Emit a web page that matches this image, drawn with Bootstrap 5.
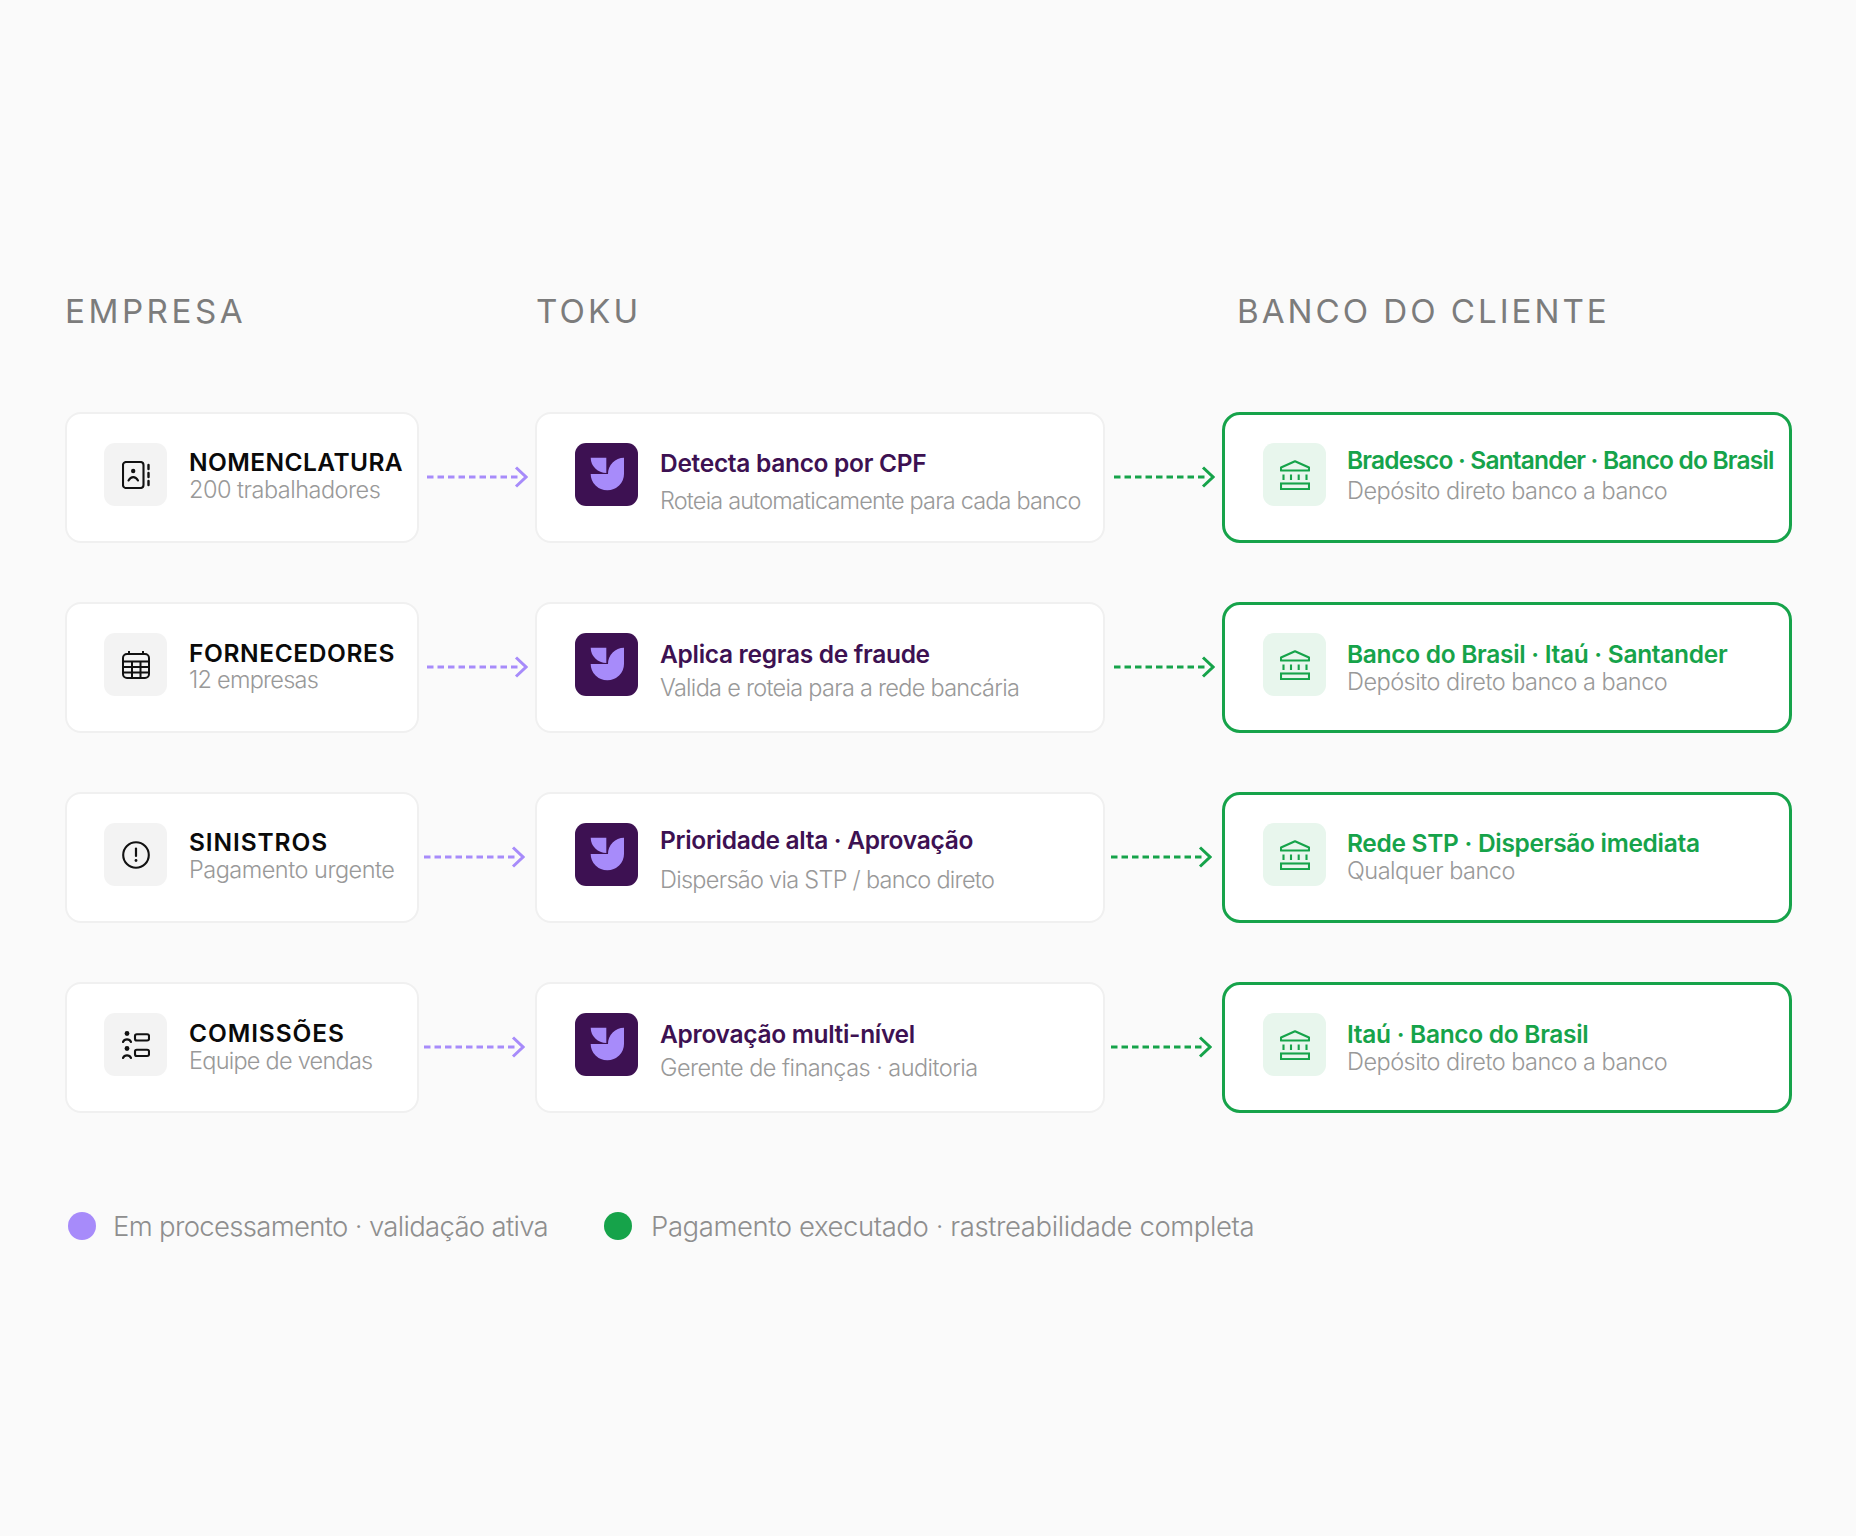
<!DOCTYPE html>
<html lang="pt-BR">
<head>
  <meta charset="utf-8">
  <title>Fluxo de pagamentos</title>
  <link href="https://cdn.jsdelivr.net/npm/bootstrap@5.3.0/dist/css/bootstrap.min.css" rel="stylesheet">
  <style>
    body {
      background-color: #fafafa;
      font-family: "Inter", "Liberation Sans", sans-serif;
      min-height: 1536px;
    }
    .flow-page {
      padding: 288px 0 0 65px;
    }
    .head-row {
      display: flex;
      margin-bottom: 78px;
      font-size: 33.2px;
      line-height: 46px;
      letter-spacing: 3.1px;
      color: #7c7c7c;
    }
    .head-empresa { width: 471px; letter-spacing: 3.5px; }
    .head-toku { width: 701px; }
    .head-banco { letter-spacing: 2.95px; }
    .flow-grid {
      display: grid;
      grid-template-columns: 354px 116px 570px 117px 570px;
      row-gap: 59px;
    }
    .flow-box {
      height: 131px;
      background: #fff;
      border: 2px solid #f0f0f0;
      border-radius: 16px;
      display: flex;
      align-items: flex-start;
      padding: 29px 0 0 37px;
    }
    .flow-box.toku { padding-left: 38px; }
    .flow-box.done {
      border: 3px solid #16a34a;
      border-radius: 18px;
      padding: 28px 0 0 38px;
    }
    .glyph-box {
      width: 63px;
      height: 63px;
      flex: none;
      border-radius: 11px;
      background: #f3f3f3;
      display: flex;
      align-items: center;
      justify-content: center;
    }
    .glyph-box.brand { background: #3d1152; }
    .glyph-box.bank { background: #e8f6ed; }
    .stack { margin-left: 22px; white-space: nowrap; }
    .flow-box.done .stack { margin-left: 21px; }
    .stack-title {
      font-size: 24.5px;
      line-height: 30px;
      font-weight: 600;
      letter-spacing: -0.3px;
    }
    .stack-title.who { color: #0a0a0a; letter-spacing: 0.6px; }
    .stack-title.who.who-narrow { letter-spacing: 0.42px; }
    .stack-title.who.who-wide { letter-spacing: 0.9px; }
    .toku .stack-title { color: #3d1152; }
    .done .stack-title { color: #16a34a; }
    .stack-title.squeezed { letter-spacing: -0.82px; }
    .stack-sub {
      font-size: 23.5px;
      line-height: 30px;
      font-weight: 300;
      color: #999;
      letter-spacing: -0.5px;
    }
    .toku .stack-sub { letter-spacing: -0.72px; }
    .toku .stack-sub.sub-tight { letter-spacing: -0.83px; }
    .toku .stack-sub.sub-wide { letter-spacing: -0.55px; }
    .stack-sub.sub-tight { letter-spacing: -0.75px; }
    .top-47 { margin-top: 2px; }
    .top-49 { margin-top: 4px; }
    .top-50 { margin-top: 5px; }
    .top-51 { margin-top: 6px; }
    .gap-27 { margin-top: -3px; }
    .gap-28 { margin-top: -2px; }
    .gap-31 { margin-top: 1px; }
    .gap-34 { margin-top: 4px; }
    .gap-38 { margin-top: 8px; }
    .gap-40 { margin-top: 10px; }
    .hop {
      display: flex;
      align-items: flex-start;
      padding: 53px 0 0 8px;
    }
    .hop.left-shift { padding-left: 5px; }
    .hop.to-bank { padding-left: 9px; }
    .hop.to-bank.left-shift { padding-left: 6px; }
    .legend-line {
      display: flex;
      align-items: center;
      margin-top: 93px;
      padding-left: 3px;
      font-size: 27.5px;
      line-height: 40px;
      font-weight: 300;
      color: #8e8e8e;
    }
    .legend-first { letter-spacing: -0.68px; }
    .legend-second { letter-spacing: -0.42px; }
    .legend-dot {
      width: 28px;
      height: 28px;
      border-radius: 50%;
      flex: none;
      margin-right: 17px;
    }
    .legend-dot.purple { background: #a78bfa; }
    .legend-dot.green { background: #16a34a; margin-left: 56px; margin-right: 19px; }
  </style>
</head>
<body>
  <svg width="0" height="0" class="position-absolute">
    <defs>
      <symbol id="logo" viewBox="0 0 63 63">
        <path fill="#a78bfa" d="M15.7 14.7H31.3V30A15.6 15.6 0 0 1 15.7 14.7Z"/>
        <path fill="#a78bfa" d="M15.7 31H33A16 16.3 0 0 1 49 14.7V31A16.6 16.3 0 0 1 32.3 47.3A16.6 16.3 0 0 1 15.7 31Z"/>
      </symbol>
      <symbol id="bank" viewBox="0 0 30 30">
        <g fill="none" stroke="#16a34a" stroke-width="2.1">
          <path d="M1 10.5V7.5L15 1.2 29 7.5V10.5Z" stroke-linejoin="round"/>
          <path d="M3.5 14.5V20M11 14.5V20M18.7 14.5V20M26.5 14.5V20"/>
          <rect x="1" y="23.5" width="28" height="5.6"/>
        </g>
      </symbol>
      <symbol id="arrow-purple" viewBox="0 0 101 24">
        <path d="M0 12H92" stroke="#a78bfa" stroke-width="3" stroke-dasharray="6.5 4"/>
        <path d="M89 2.5 99 12 89 21.5" fill="none" stroke="#a78bfa" stroke-width="3"/>
      </symbol>
      <symbol id="arrow-green" viewBox="0 0 101 24">
        <path d="M0 12H92" stroke="#16a34a" stroke-width="3" stroke-dasharray="6.5 4"/>
        <path d="M89 2.5 99 12 89 21.5" fill="none" stroke="#16a34a" stroke-width="3"/>
      </symbol>
    </defs>
  </svg>

  <div class="flow-page">
    <div class="head-row">
      <div class="head-empresa">EMPRESA</div>
      <div class="head-toku">TOKU</div>
      <div class="head-banco">BANCO DO CLIENTE</div>
    </div>

    <div class="flow-grid">
      <!-- linha 1 -->
      <div class="flow-box">
        <div class="glyph-box">
          <svg width="28" height="28" viewBox="0 0 28 28" fill="none" stroke="#111" stroke-width="2.1">
            <rect x="1" y="1" width="20.5" height="26" rx="3"/>
            <circle cx="11.2" cy="10" r="2.2" fill="#111" stroke="none"/>
            <path d="M6.5 19.5C9 15 13.5 15 16 19.5" stroke-linecap="round"/>
            <path d="M26.5 4V8M26.5 12V16M26.5 20V24" stroke-linecap="round" stroke-width="2.4"/>
          </svg>
        </div>
        <div class="stack">
          <div class="stack-title who who-narrow top-49">NOMENCLATURA</div>
          <div class="stack-sub gap-28">200 trabalhadores</div>
        </div>
      </div>
      <div class="hop"><svg width="101" height="24"><use href="#arrow-purple"/></svg></div>
      <div class="flow-box toku">
        <div class="glyph-box brand"><svg width="63" height="63"><use href="#logo"/></svg></div>
        <div class="stack">
          <div class="stack-title top-50">Detecta banco por CPF</div>
          <div class="stack-sub sub-tight gap-38">Roteia automaticamente para cada banco</div>
        </div>
      </div>
      <div class="hop to-bank"><svg width="101" height="24"><use href="#arrow-green"/></svg></div>
      <div class="flow-box done">
        <div class="glyph-box bank"><svg width="30" height="30"><use href="#bank"/></svg></div>
        <div class="stack">
          <div class="stack-title squeezed top-47">Bradesco · Santander · Banco do Brasil</div>
          <div class="stack-sub gap-31">Depósito direto banco a banco</div>
        </div>
      </div>

      <!-- linha 2 -->
      <div class="flow-box">
        <div class="glyph-box">
          <svg width="28" height="28" viewBox="0 0 28 28" fill="none" stroke="#111" stroke-width="2">
            <rect x="1" y="3" width="26" height="24" rx="4"/>
            <path d="M1 10.5H27M1 16H27M1 21.5H27M10 10.5V27M18.5 10.5V27"/>
            <path d="M7 0V4M21 0V4"/>
          </svg>
        </div>
        <div class="stack">
          <div class="stack-title who top-50">FORNECEDORES</div>
          <div class="stack-sub sub-tight gap-27">12 empresas</div>
        </div>
      </div>
      <div class="hop"><svg width="101" height="24"><use href="#arrow-purple"/></svg></div>
      <div class="flow-box toku">
        <div class="glyph-box brand"><svg width="63" height="63"><use href="#logo"/></svg></div>
        <div class="stack">
          <div class="stack-title top-51">Aplica regras de fraude</div>
          <div class="stack-sub gap-34">Valida e roteia para a rede bancária</div>
        </div>
      </div>
      <div class="hop to-bank"><svg width="101" height="24"><use href="#arrow-green"/></svg></div>
      <div class="flow-box done">
        <div class="glyph-box bank"><svg width="30" height="30"><use href="#bank"/></svg></div>
        <div class="stack">
          <div class="stack-title top-51">Banco do Brasil · Itaú · Santander</div>
          <div class="stack-sub gap-28">Depósito direto banco a banco</div>
        </div>
      </div>

      <!-- linha 3 -->
      <div class="flow-box">
        <div class="glyph-box">
          <svg width="28" height="28" viewBox="0 0 28 28" fill="none" stroke="#111" stroke-width="2.1">
            <circle cx="14" cy="14" r="12.8"/>
            <path d="M14 7.5V15" stroke-linecap="round" stroke-width="2.2"/>
            <circle cx="14" cy="19.5" r="1.4" fill="#111" stroke="none"/>
          </svg>
        </div>
        <div class="stack">
          <div class="stack-title who who-wide top-49">SINISTROS</div>
          <div class="stack-sub gap-28">Pagamento urgente</div>
        </div>
      </div>
      <div class="hop left-shift"><svg width="101" height="24"><use href="#arrow-purple"/></svg></div>
      <div class="flow-box toku">
        <div class="glyph-box brand"><svg width="63" height="63"><use href="#logo"/></svg></div>
        <div class="stack">
          <div class="stack-title top-47">Prioridade alta · Aprovação</div>
          <div class="stack-sub gap-40">Dispersão via STP / banco direto</div>
        </div>
      </div>
      <div class="hop to-bank left-shift"><svg width="101" height="24"><use href="#arrow-green"/></svg></div>
      <div class="flow-box done">
        <div class="glyph-box bank"><svg width="30" height="30"><use href="#bank"/></svg></div>
        <div class="stack">
          <div class="stack-title top-50">Rede STP · Dispersão imediata</div>
          <div class="stack-sub gap-28">Qualquer banco</div>
        </div>
      </div>

      <!-- linha 4 -->
      <div class="flow-box">
        <div class="glyph-box">
          <svg width="28" height="28" viewBox="0 0 28 28" fill="none" stroke="#111" stroke-width="2.1">
            <circle cx="5" cy="2.5" r="2.4" fill="#111" stroke="none"/>
            <path d="M1 11C2.5 7.5 7.5 7.5 9 11" stroke-linecap="round"/>
            <rect x="13" y="3.2" width="14" height="6.3" rx="1.8"/>
            <circle cx="5" cy="17.5" r="2.4" fill="#111" stroke="none"/>
            <path d="M1 27C2.5 23.5 7.5 23.5 9 27" stroke-linecap="round"/>
            <rect x="13" y="18.7" width="14" height="6.3" rx="1.8"/>
          </svg>
        </div>
        <div class="stack">
          <div class="stack-title who who-wide top-50">COMISSÕES</div>
          <div class="stack-sub sub-tight gap-28">Equipe de vendas</div>
        </div>
      </div>
      <div class="hop left-shift"><svg width="101" height="24"><use href="#arrow-purple"/></svg></div>
      <div class="flow-box toku">
        <div class="glyph-box brand"><svg width="63" height="63"><use href="#logo"/></svg></div>
        <div class="stack">
          <div class="stack-title top-51">Aprovação multi-nível</div>
          <div class="stack-sub sub-wide gap-34">Gerente de finanças · auditoria</div>
        </div>
      </div>
      <div class="hop to-bank left-shift"><svg width="101" height="24"><use href="#arrow-green"/></svg></div>
      <div class="flow-box done">
        <div class="glyph-box bank"><svg width="30" height="30"><use href="#bank"/></svg></div>
        <div class="stack">
          <div class="stack-title top-51">Itaú · Banco do Brasil</div>
          <div class="stack-sub gap-28">Depósito direto banco a banco</div>
        </div>
      </div>
    </div>

    <div class="legend-line">
      <span class="legend-dot purple"></span>
      <span class="legend-first">Em processamento · validação ativa</span>
      <span class="legend-dot green"></span>
      <span class="legend-second">Pagamento executado · rastreabilidade completa</span>
    </div>
  </div>

  <script src="https://cdn.jsdelivr.net/npm/bootstrap@5.3.0/dist/js/bootstrap.bundle.min.js"></script>
</body>
</html>
